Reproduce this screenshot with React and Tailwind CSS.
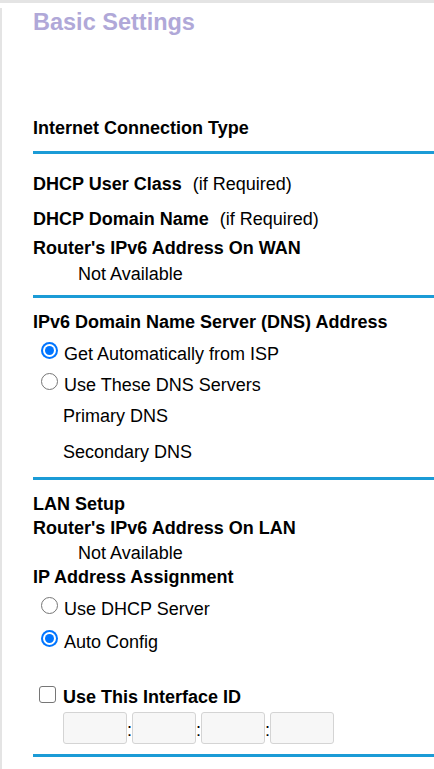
import React from "react";

const Line = ({ mt }) => <div className={`h-[3px] bg-[#1b9bd6] ${mt}`} />;

const Radio = ({ checked }) =>
  checked ? (
    <span className="mt-[-2px] w-[17px] h-[17px] shrink-0 rounded-full bg-[#0075ff] flex items-center justify-center">
      <span className="w-[13px] h-[13px] rounded-full bg-white flex items-center justify-center">
        <span className="w-[9px] h-[9px] rounded-full bg-[#0075ff]" />
      </span>
    </span>
  ) : (
    <span className="mt-[-2px] w-[17px] h-[17px] shrink-0 rounded-full border-[1.5px] border-[#767676] bg-white" />
  );

export default function App() {
  const font = { fontFamily: '"Liberation Sans", Arial, sans-serif' };
  return (
    <div className="w-[434px] h-[769px] bg-white overflow-hidden" style={font}>
      <div className="h-[3px] bg-[#e4e4e4]" />
      <div className="border-l-2 border-[#e4e4e4] pl-[31px] h-[766px] text-[18px] text-black">
        <div className="mt-[5px] h-[28px] leading-[28px] text-[23.5px] font-bold text-[#b0a8d8]">Basic Settings</div>

        <div className="mt-[82px] h-[20px] leading-[20px] font-bold">Internet Connection Type</div>
        <Line mt="mt-[13px]" />

        <div className="mt-[20px] h-[20px] leading-[20px] flex">
          <span className="font-bold">DHCP User Class</span>
          <span className="ml-[11px]">(if Required)</span>
        </div>
        <div className="mt-[15px] h-[20px] leading-[20px] flex">
          <span className="font-bold">DHCP Domain Name</span>
          <span className="ml-[11px]">(if Required)</span>
        </div>
        <div className="mt-[9px] h-[20px] leading-[20px] font-bold">Router's IPv6 Address On WAN</div>
        <div className="mt-[6px] h-[20px] leading-[20px] ml-[45px]">Not Available</div>
        <Line mt="mt-[11px]" />

        <div className="mt-[14px] h-[20px] leading-[20px] font-bold">IPv6 Domain Name Server (DNS) Address</div>
        <div className="mt-[12px] h-[20px] leading-[20px] flex items-start ml-[8px]">
          <Radio checked />
          <span className="ml-[6px]">Get Automatically from ISP</span>
        </div>
        <div className="mt-[11px] h-[20px] leading-[20px] flex items-start ml-[8px]">
          <Radio />
          <span className="ml-[6px]">Use These DNS Servers</span>
        </div>
        <div className="mt-[11px] h-[20px] leading-[20px] ml-[30px]">Primary DNS</div>
        <div className="mt-[16px] h-[20px] leading-[20px] ml-[30px]">Secondary DNS</div>
        <Line mt="mt-[15px]" />

        <div className="mt-[14px] h-[20px] leading-[20px] font-bold">LAN Setup</div>
        <div className="mt-[4px] h-[20px] leading-[20px] font-bold">Router's IPv6 Address On LAN</div>
        <div className="mt-[5px] h-[20px] leading-[20px] ml-[45px]">Not Available</div>
        <div className="mt-[4px] h-[20px] leading-[20px] font-bold">IP Address Assignment</div>
        <div className="mt-[12px] h-[20px] leading-[20px] flex items-start ml-[8px]">
          <Radio />
          <span className="ml-[6px]">Use DHCP Server</span>
        </div>
        <div className="mt-[13px] h-[20px] leading-[20px] flex items-start ml-[8px]">
          <Radio checked />
          <span className="ml-[6px]">Auto Config</span>
        </div>

        <div className="mt-[35px] h-[20px] leading-[20px] flex items-start ml-[6px]">
          <span className="mt-[-1px] w-[17px] h-[17px] shrink-0 rounded-[3px] border-[1.5px] border-[#767676] bg-white" />
          <span className="ml-[7px] font-bold">Use This Interface ID</span>
        </div>
        <div className="mt-[5px] ml-[30px] flex items-center h-[32px]">
          <div className="w-[64px] h-[32px] bg-[#f7f7f7] border border-[#d4d4d4] rounded-[3px]" />
          <span className="w-[5px] text-center leading-[20px] mt-[4px]">:</span>
          <div className="w-[64px] h-[32px] bg-[#f7f7f7] border border-[#d4d4d4] rounded-[3px]" />
          <span className="w-[5px] text-center leading-[20px] mt-[4px]">:</span>
          <div className="w-[64px] h-[32px] bg-[#f7f7f7] border border-[#d4d4d4] rounded-[3px]" />
          <span className="w-[5px] text-center leading-[20px] mt-[4px]">:</span>
          <div className="w-[64px] h-[32px] bg-[#f7f7f7] border border-[#d4d4d4] rounded-[3px]" />
        </div>
        <Line mt="mt-[10px]" />
      </div>
    </div>
  );
}
